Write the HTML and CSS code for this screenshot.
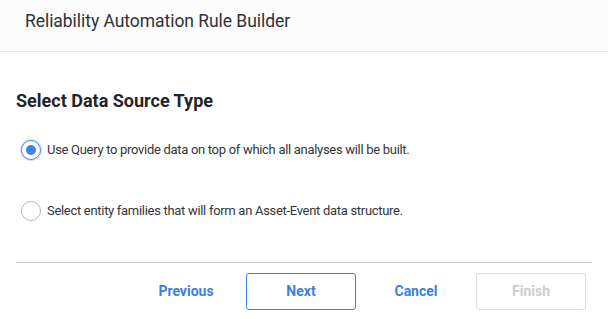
FILE: index.html
```html
<!DOCTYPE html>
<html lang="en">
<head>
<meta charset="utf-8">
<title>Reliability Automation Rule Builder</title>
<link rel="stylesheet" href="styles.css">
</head>
<body>
<div class="dialog">
  <header class="dialog-header">
    <h1 class="dialog-title">Reliability Automation Rule Builder</h1>
  </header>
  <main class="dialog-body">
    <h2 class="section-title">Select Data Source Type</h2>
    <div class="options">
      <label class="option">
        <span class="radio radio-checked"><span class="radio-dot"></span></span>
        <span class="option-text">Use Query to provide data on top of which all analyses will be built.</span>
      </label>
      <label class="option">
        <span class="radio"></span>
        <span class="option-text">Select entity families that will form an Asset-Event data structure.</span>
      </label>
    </div>
  </main>
  <div class="divider"></div>
  <footer class="dialog-footer">
    <button class="btn btn-link">Previous</button>
    <button class="btn btn-outline">Next</button>
    <button class="btn btn-link">Cancel</button>
    <button class="btn btn-disabled" disabled>Finish</button>
  </footer>
</div>
</body>
</html>
```

FILE: styles.css
```css
* {
  box-sizing: border-box;
}

html, body {
  margin: 0;
  padding: 0;
  background: #ffffff;
}

body {
  font-family: Roboto, "Open Sans", sans-serif;
  color: #333333;
}

.dialog {
  width: 608px;
  height: 319px;
  display: flex;
  flex-direction: column;
}

.dialog-header {
  height: 52px;
  background: #fcfcfc;
  border-bottom: 1px solid #e8e8e8;
  padding: 11px 0 0 25px;
}

.dialog-title {
  margin: 0;
  font-size: 17.5px;
  line-height: 20px;
  font-weight: 400;
  color: #2f3236;
  letter-spacing: -0.05px;
}

.dialog-body {
  padding: 37px 16px 0 16px;
}

.section-title {
  margin: 0;
  font-size: 18px;
  line-height: 24px;
  font-weight: 700;
  color: #222428;
  letter-spacing: 0;
}

.options {
  margin-top: 27px;
  padding-left: 5px;
  display: flex;
  flex-direction: column;
  gap: 41px;
}

.option {
  display: flex;
  align-items: center;
  height: 20px;
  gap: 6px;
}

.radio {
  width: 20px;
  height: 20px;
  border-radius: 50%;
  border: 1px solid #b9b9b9;
  background: #ffffff;
  display: flex;
  align-items: center;
  justify-content: center;
  flex: none;
}

.radio-checked {
  border: 1.5px solid #4a8ff0;
  box-shadow: 0 0 0 1px rgba(74, 143, 240, 0.25);
}

.radio-dot {
  width: 10px;
  height: 10px;
  border-radius: 50%;
  background: #3d84ec;
}

.option-text {
  font-size: 13px;
  line-height: 20px;
  letter-spacing: -0.3px;
  color: #33363a;
}

.divider {
  margin: 41px 16px 0 16px;
  height: 1px;
  background: #cccccc;
}

.dialog-footer {
  margin-top: 10px;
  padding-right: 22px;
  display: flex;
  justify-content: flex-end;
  gap: 5px;
}

.btn {
  width: 110px;
  height: 37px;
  border-radius: 3px;
  border: 1px solid transparent;
  background: transparent;
  font-family: Roboto, "Open Sans", sans-serif;
  font-size: 14px;
  font-weight: 700;
  color: #3d7fe0;
  padding: 0 0 1px 0;
}

.btn-outline {
  border-color: #3d84ea;
}

.btn-disabled {
  border-color: #dcdcdc;
  color: #cdcdcd;
}
```
